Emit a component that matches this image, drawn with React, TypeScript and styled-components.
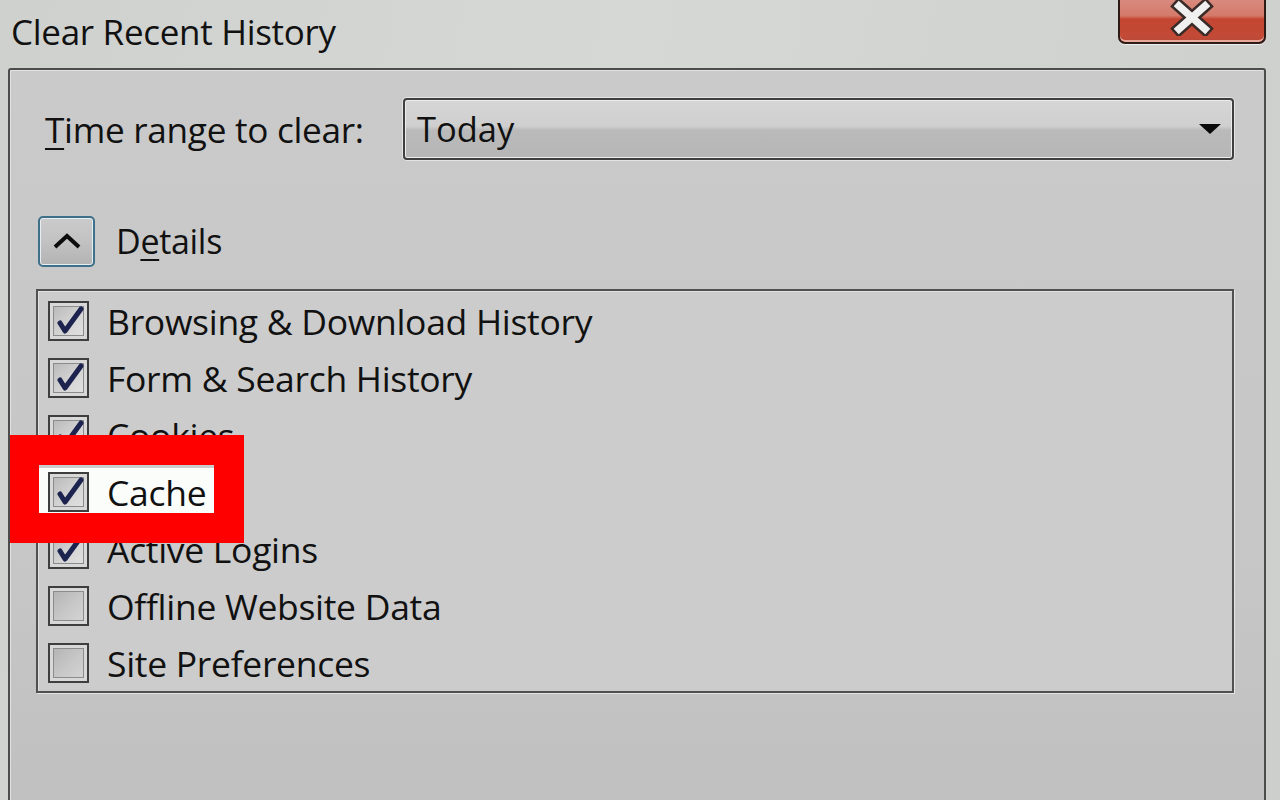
import React from "react";
import styled, { createGlobalStyle } from "styled-components";

const GlobalStyle = createGlobalStyle`
  html, body {
    margin: 0;
    padding: 0;
    width: 1280px;
    height: 800px;
    overflow: hidden;
    background: #d0d1cf;
  }
  * { box-sizing: border-box; }
`;

const FONT = `"Open Sans", "Noto Sans", "Liberation Sans", sans-serif`;

const Window = styled.div`
  position: relative;
  display: flex;
  flex-direction: column;
  width: 1280px;
  height: 800px;
  font-family: ${FONT};
  color: #111;
  background: linear-gradient(100deg, #cfd1cf 0%, #d6d8d6 45%, #cdcfcd 100%);
`;

const TitleBar = styled.div`
  display: flex;
  justify-content: space-between;
  align-items: flex-start;
  height: 68px;
  padding-left: 11px;
  padding-right: 14px;
`;

const Title = styled.div`
  font-size: 35px;
  line-height: 36px;
  margin-top: 14px;
  letter-spacing: -0.3px;
`;

const CloseButton = styled.div`
  display: flex;
  align-items: flex-start;
  justify-content: center;
  padding-top: 2px;
  width: 148px;
  height: 46px;
  margin-top: -2px;
  border: 2px solid #2e1a16;
  border-top: none;
  border-radius: 0 0 7px 7px;
  background: linear-gradient(
    180deg,
    #d98b7f 0%,
    #d47a6b 40%,
    #c44632 48%,
    #c24a36 85%,
    #b9493a 100%
  );
  box-shadow: inset 0 -2px 0 #e8a89c, 0 1px 0 #eeeeee;
`;

const Panel = styled.div`
  flex: 1;
  display: flex;
  flex-direction: column;
  margin: 0 14px 0 8px;
  padding: 28px 30px 0 26px;
  border: 2px solid #4c4c4c;
  border-bottom: none;
  border-radius: 3px 3px 0 0;
  background: linear-gradient(180deg, #cacaca 0%, #c6c6c6 70%, #c0c0c0 100%);
  box-shadow: inset 1px 1px 0 #e2e2e2;
`;

const RangeRow = styled.div`
  display: flex;
  align-items: center;
  height: 62px;
`;

const Label = styled.div`
  width: 367px;
  padding-left: 9px;
  font-size: 35.2px;
  line-height: 40px;
  letter-spacing: -0.3px;
`;

const Key = styled.span`
  text-decoration: underline;
  text-decoration-thickness: 2px;
  text-underline-offset: 5px;
`;

const Select = styled.div`
  flex: 1;
  display: flex;
  align-items: center;
  justify-content: space-between;
  height: 62px;
  padding: 0 10px 0 12px;
  border: 2px solid #3f3f3f;
  border-radius: 4px;
  background: linear-gradient(180deg, #d6d6d6 0%, #cfcfcf 45%, #bababa 52%, #b6b6b6 100%);
  box-shadow: inset 0 0 0 1px #ececec, 0 0 0 1px #e4e4e4;
  font-size: 34.5px;
  line-height: 40px;
`;

const DetailsRow = styled.div`
  display: flex;
  align-items: center;
  gap: 21px;
  margin-top: 55px;
  height: 52px;
`;

const Toggle = styled.div`
  display: flex;
  align-items: center;
  justify-content: center;
  width: 57px;
  height: 51px;
  margin-left: 2px;
  border: 2px solid #3e7189;
  border-radius: 5px;
  background: linear-gradient(180deg, #cbcbcb 0%, #c2c2c2 50%, #b3b3b3 100%);
  box-shadow: inset 0 0 0 1px #e6eef2;
`;

const DetailsText = styled.div`
  font-size: 34px;
  line-height: 40px;
  letter-spacing: -0.3px;
`;

const ListBox = styled.div`
  display: flex;
  flex-direction: column;
  margin-top: 22px;
  height: 404px;
  padding-top: 1px;
  border: 2px solid #505050;
  background: #cccccc;
  box-shadow: inset 1px 1px 0 #e0e0e0, 1px 1px 0 #e4e4e4;
`;

const Row = styled.div`
  display: flex;
  align-items: center;
  height: 57.2px;
`;

const Item = styled.div<{ $highlight?: boolean }>`
  display: flex;
  align-items: center;
  gap: 18px;
  padding: 0 10px 0 10px;
  height: 48px;
  background: ${(p) => (p.$highlight ? "#fbfdfb" : "transparent")};
  font-size: 35.5px;
  line-height: 40px;
  letter-spacing: -0.3px;
`;

const Box = styled.div<{ $checked: boolean }>`
  position: relative;
  width: 41px;
  height: 40px;
  flex-shrink: 0;
  border: 2px solid #3e3e3e;
  background: ${(p) =>
    p.$checked
      ? "linear-gradient(135deg, #b4b4b4 0%, #d4d4d4 55%, #e4e4e4 100%)"
      : "linear-gradient(135deg, #b0b0b0 0%, #c8c8c8 55%, #d6d6d6 100%)"};
  box-shadow: inset 0 0 0 3px #d8d8d8, inset 0 0 0 4px #8c8c8c;
`;

const Mark = styled.svg`
  position: absolute;
  left: 0;
  top: 0;
`;

const Callout = styled.div`
  position: absolute;
  left: 10px;
  top: 435px;
  width: 234px;
  height: 108px;
  border: 30px solid #ff0000;
  border-left-width: 29px;
  pointer-events: none;
`;

const CloseGlyph = () => (
  <svg width="44" height="36" viewBox="0 0 44 36">
    <path d="M9 6 L35 29 M35 6 L9 29" stroke="#3a2a28" strokeWidth="12.5" strokeLinecap="square" />
    <path d="M9 6 L35 29 M35 6 L9 29" stroke="#f0f0f0" strokeWidth="7.5" strokeLinecap="square" />
  </svg>
);

const ArrowDown = () => (
  <svg width="24" height="12" viewBox="0 0 24 12">
    <path d="M1 1 L23 1 L12 11 Z" fill="#0a0a0a" />
  </svg>
);

const ChevronUp = () => (
  <svg width="30" height="18" viewBox="0 0 30 18">
    <path d="M3 15 L15 4 L27 15" fill="none" stroke="#0c0c0c" strokeWidth="4" />
  </svg>
);

const Check = () => (
  <Mark width="37" height="36" viewBox="0 0 37 36">
    <path
      d="M10 20 L15 28 L31 6"
      fill="none"
      stroke="#1c234e"
      strokeWidth="5"
      strokeLinecap="round"
      strokeLinejoin="round"
    />
  </Mark>
);

const items = [
  { label: "Browsing & Download History", checked: true },
  { label: "Form & Search History", checked: true },
  { label: "Cookies", checked: true },
  { label: "Cache", checked: true, highlight: true },
  { label: "Active Logins", checked: true },
  { label: "Offline Website Data", checked: false },
  { label: "Site Preferences", checked: false },
];

export default function App() {
  return (
    <Window>
      <GlobalStyle />
      <TitleBar>
        <Title>Clear Recent History</Title>
        <CloseButton>
          <CloseGlyph />
        </CloseButton>
      </TitleBar>

      <Panel>
        <RangeRow>
          <Label>
            <Key>T</Key>ime range to clear:
          </Label>
          <Select>
            <span>Today</span>
            <ArrowDown />
          </Select>
        </RangeRow>

        <DetailsRow>
          <Toggle>
            <ChevronUp />
          </Toggle>
          <DetailsText>
            D<Key>e</Key>tails
          </DetailsText>
        </DetailsRow>

        <ListBox>
          {items.map((it) => (
            <Row key={it.label}>
              <Item $highlight={it.highlight}>
                <Box $checked={it.checked}>{it.checked && <Check />}</Box>
                <span>{it.label}</span>
              </Item>
            </Row>
          ))}
        </ListBox>
      </Panel>

      {/* red annotation frame round the Cache row */}
      <Callout />
    </Window>
  );
}
